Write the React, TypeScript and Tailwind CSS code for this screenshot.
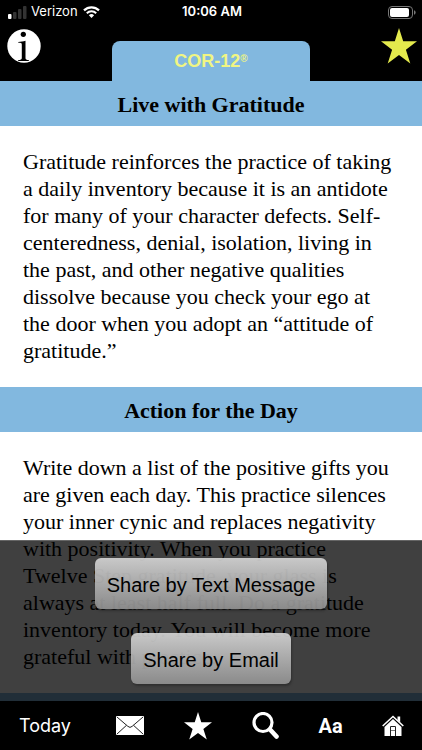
import React from 'react';

const readings = [
  {
    title: 'Live with Gratitude',
    body: 'Gratitude reinforces the practice of taking a daily inventory because it is an antidote for many of your character defects. Self-centeredness, denial, isolation, living in the past, and other negative qualities dissolve because you check your ego at the door when you adopt an “attitude of gratitude.”',
  },
  {
    title: 'Action for the Day',
    body: 'Write down a list of the positive gifts you are given each day. This practice silences your inner cynic and replaces negativity with positivity. When you practice Twelve Step gratitude, your glass is always at least half full. Do a gratitude inventory today. You will become more grateful with practice.',
  },
];

const StarIcon = ({ className }: { className: string }) => (
  <svg viewBox="0 0 36 36" className={className} fill="currentColor" aria-hidden="true">
    <path d="M18 0 22.2 13.3H36L24.9 21.8 29.3 35.5 18 27 6.7 35.5 11.1 21.8 0 13.3H13.8Z" />
  </svg>
);

const StatusBar = () => (
  <div className="grid h-6 grid-cols-3 items-center pl-2 pr-1.5 text-white">
    <div className="flex items-center gap-1">
      <svg viewBox="0 0 19 13" className="h-[13px] w-[19px]" aria-hidden="true">
        <rect x="0" y="8" width="3.5" height="5" rx="1" fill="#fff" />
        <rect x="5" y="6" width="3.5" height="7" rx="1" fill="#333" />
        <rect x="10" y="3" width="3.5" height="10" rx="1" fill="#333" />
        <rect x="15" y="0" width="3.5" height="13" rx="1" fill="#333" />
      </svg>
      <span className="text-[13px]">Verizon</span>
      <svg viewBox="0 0 17 12" className="ml-px h-3 w-[17px]" aria-hidden="true">
        <path d="M1 4.4a10.6 10.6 0 0 1 15 0" fill="none" stroke="#fff" strokeWidth="2.2" />
        <path d="M3.8 7.3a6.6 6.6 0 0 1 9.4 0" fill="none" stroke="#fff" strokeWidth="2" />
        <path d="M8.5 12 5.9 9.3a3.7 3.7 0 0 1 5.2 0Z" fill="#fff" />
      </svg>
    </div>
    <span className="text-center text-[13px] font-semibold">10:06 AM</span>
    <svg viewBox="0 0 28 13" className="h-[13px] w-7 justify-self-end" aria-hidden="true">
      <rect x=".5" y=".5" width="24" height="12" rx="3.5" fill="none" stroke="#777" />
      <rect x="2" y="2" width="19" height="9" rx="2" fill="#fff" />
      <path d="M26 4.3a2.3 2.3 0 0 1 0 4.4Z" fill="#777" />
    </svg>
  </div>
);

const Header = () => (
  <header className="grid h-[57px] grid-cols-[1fr_198px_1fr] bg-black">
    <div className="flex items-start pl-[7px] pt-[5px]">
      <button type="button" aria-label="Information">
        <svg viewBox="0 0 34 34" className="h-[34px] w-[34px]" aria-hidden="true">
          <circle cx="17" cy="17" r="16.7" fill="#fff" />
          <circle cx="16.3" cy="5.3" r="2.6" fill="#000" />
          <path d="M11.3 12.9c2.9 0 4.9-.5 7.2-1.2V29c0 1.500.9 2 3.300 2.100v.8H11.200v-.8c2.500-.1 3.600-.6 3.600-2.100V15.400c0-1.400-.9-1.700-3.500-1.700Z" fill="#000" />
        </svg>
      </button>
    </div>
    <div className="mt-[17px] rounded-t-lg bg-[#82b8df] pt-2 text-center font-['Liberation_Sans',sans-serif] text-lg font-bold leading-6 text-[#f0f583]">
      COR-12<sup className="text-[10px]">®</sup>
    </div>
    <div className="flex items-start justify-end pr-[5px] pt-1">
      <button type="button" aria-label="Favorite" className="text-[#e4ea4d]">
        <StarIcon className="h-9 w-9" />
      </button>
    </div>
  </header>
);

const SharePanel = () => {
  const buttonStyle =
    'rounded-md bg-linear-to-b from-[#d6d6d6e8] to-[#929292e8] px-3 pt-[3px] text-xl leading-[48px] text-black shadow-[1px_2px_2px_#2228]';
  return (
    <div className="absolute inset-x-0 bottom-0 flex h-[161px] flex-col items-center gap-6 border-t border-[#666] bg-black/75 pt-[17px] font-['Liberation_Sans',sans-serif]">
      <button type="button" className={buttonStyle}>Share by Text Message</button>
      <button type="button" className={buttonStyle}>Share by Email</button>
    </div>
  );
};

const Toolbar = () => (
  <nav className="flex h-[49px] items-center justify-between bg-black pl-[19px] pr-[18px] text-white">
    <button type="button" className="text-lg">Today</button>
    <button type="button" aria-label="Share" className="ml-1.5">
      <svg viewBox="0 0 28 19" className="h-[19px] w-7" aria-hidden="true">
        <rect width="28" height="19" rx="1" fill="#fff" />
        <path d="M1 1 11.8 10.3Q14 12.5 16.2 10.3L27 1M1 18 10.5 9.3M27 18 17.5 9.3" fill="none" stroke="#222" strokeWidth="1" />
      </svg>
    </button>
    <button type="button" aria-label="Favorites">
      <StarIcon className="h-7 w-7" />
    </button>
    <button type="button" aria-label="Search">
      <svg viewBox="0 0 28 28" className="h-7 w-7" fill="none" stroke="#fff" aria-hidden="true">
        <circle cx="12" cy="10.5" r="9" strokeWidth="3.2" />
        <path d="m19 17.500 6.500 7" strokeWidth="4.6" strokeLinecap="round" />
      </svg>
    </button>
    <button type="button" aria-label="Text size" className="font-['Roboto',sans-serif] text-xl font-bold">Aa</button>
    <button type="button" aria-label="Home">
      <svg viewBox="0 0 22 22" className="h-[22px] w-[22px]" aria-hidden="true">
        <path d="M15.500 1.500h2.700v6l-2.700-2.500Z" fill="#fff" />
        <path d="M.7 11 11 1.500 21.300 11" fill="none" stroke="#fff" strokeWidth="1.600" />
        <path d="M2.500 12 11 4l8.500 8V21H2.500Z" fill="#fff" />
        <path d="M8.500 21V11.500h5V21" fill="none" stroke="#222" strokeWidth="1" />
        <path d="M9 15.500h4" stroke="#777" strokeWidth="1" />
      </svg>
    </button>
  </nav>
);

const App = () => (
  <div className="flex h-screen flex-col bg-black font-['Inter',sans-serif]">
    <StatusBar />
    <Header />
    <div className="relative min-h-0 flex-1 bg-white">
      <main className="h-full overflow-hidden font-['Liberation_Serif',serif] text-[22px] leading-[27px] text-black">
        {readings.map((reading) => (
          <section key={reading.title}>
            <h2 className="bg-[#82b8df] pb-2 pt-2.5 text-center font-bold">{reading.title}</h2>
            <p className="pb-[23px] pl-[23px] pr-[29px] pt-[22px]">{reading.body}</p>
          </section>
        ))}
        <div className="h-11 bg-[#82b8df]" />
      </main>
      <SharePanel />
    </div>
    <Toolbar />
  </div>
);

export default App;
